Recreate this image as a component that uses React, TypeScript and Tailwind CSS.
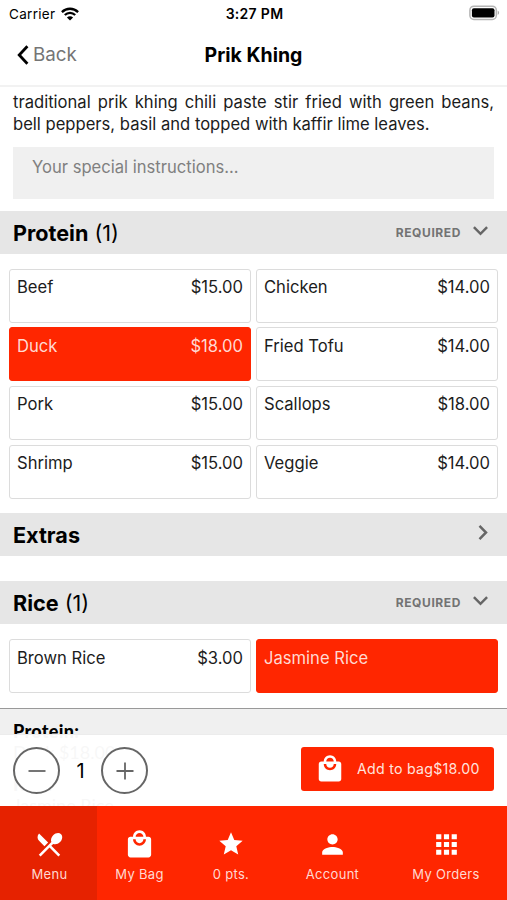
import React from 'react';
import { MdApps, MdLocalDining, MdLocalMall, MdPerson, MdStar } from 'react-icons/md';

interface Option {
  name: string;
  price?: string;
  selected?: boolean;
}

const proteins: Option[] = [
  { name: 'Beef', price: '$15.00' },
  { name: 'Chicken', price: '$14.00' },
  { name: 'Duck', price: '$18.00', selected: true },
  { name: 'Fried Tofu', price: '$14.00' },
  { name: 'Pork', price: '$15.00' },
  { name: 'Scallops', price: '$18.00' },
  { name: 'Shrimp', price: '$15.00' },
  { name: 'Veggie', price: '$14.00' },
];

const rices: Option[] = [
  { name: 'Brown Rice', price: '$3.00' },
  { name: 'Jasmine Rice', selected: true },
];

const StatusBar = () => (
  <div className="grid h-7 shrink-0 grid-cols-3 items-center pl-[9px] pr-[7px] text-[13.5px]">
    <div className="flex items-center gap-[6px]">
      <span className="tracking-[0.3px]">Carrier</span>
      <svg width="18" height="14" viewBox="0 0 18 14" fill="none" stroke="#000" strokeWidth="2.3">
        <path d="M0.9 5.1C5.5 0.6 12.5 0.6 17.1 5.1" />
        <path d="M3.8 8C6.8 5.1 11.2 5.1 14.2 8" />
        <path d="M9 13.6L5.9 10.5C7.7 8.9 10.3 8.9 12.1 10.5Z" fill="#000" stroke="none" />
      </svg>
    </div>
    <div className="pb-px text-center text-[14px] font-semibold tracking-[0.3px]">3:27 PM</div>
    <svg className="-mt-[2px] justify-self-end" width="31" height="16" viewBox="0 0 31 16">
      <rect x="0.9" y="1.2" width="26.4" height="13.2" rx="4" fill="#fff" stroke="#b5b5b5" strokeWidth="1.5" />
      <rect x="2.9" y="3.2" width="22.6" height="9.4" rx="2" fill="#000" />
      <path d="M28.7 5.6C30.6 6.3 30.6 9.3 28.7 10Z" fill="#aaa" />
    </svg>
  </div>
);

const Header = () => (
  <div className="grid h-[59px] shrink-0 grid-cols-3 items-center border-b-2 border-[#f2f2f2] px-[17px] pb-[2px]">
    <button className="flex items-center gap-[4px] text-[18.8px] text-[#757575]">
      <svg className="-mt-px" width="12" height="20" viewBox="0 0 12 20" fill="none" stroke="#000" strokeWidth="2.8">
        <path d="M10.4 1.2L2.2 10L10.4 18.8" />
      </svg>
      Back
    </button>
    <h1 className="pt-px text-center text-[19.5px] font-bold whitespace-nowrap">Prik Khing</h1>
  </div>
);

const SectionHeader = ({ title, count, open }: { title: string; count?: number; open?: boolean }) => (
  <div className="flex h-[43px] shrink-0 items-center justify-between bg-[#e6e6e6] pl-[13px] pr-[19px]">
    <h2 className="pt-[2px] text-[21.6px] font-bold">
      {title}
      {count && <span className="font-normal"> ({count})</span>}
    </h2>
    {open ? (
      <div className="flex items-center gap-3 text-xs font-bold tracking-[0.6px] text-[#737373]">
        REQUIRED
        <svg className="-mt-1" width="15" height="10" viewBox="0 0 15 10" fill="none" stroke="#666" strokeWidth="2.5">
          <path d="M0.9 1.2L7.5 7.8L14.1 1.2" />
        </svg>
      </div>
    ) : (
      <svg className="-mt-1" width="10" height="15" viewBox="0 0 10 15" fill="none" stroke="#666" strokeWidth="2.5">
        <path d="M1.5 0.9L8 7.5L1.5 14.1" />
      </svg>
    )}
  </div>
);

const OptionGrid = ({ options }: { options: Option[] }) => (
  <div className="grid grid-cols-2 gap-x-[5px] gap-y-[4.7px] px-[9px] text-[16.6px] leading-5">
    {options.map((o) => (
      <div
        key={o.name}
        className={`flex h-[54px] justify-between rounded-[3px] border px-[7px] pt-[7.5px] ${
          o.selected ? 'border-[#ff2600] bg-[#ff2600] text-[#ffd9d2]' : 'border-[#dcdcdc] bg-white text-[#1c1c1c]'
        }`}
      >
        <span>{o.name}</span>
        <span>{o.price}</span>
      </div>
    ))}
  </div>
);

const OrderBar = () => (
  <div className="absolute inset-x-0 bottom-[94px] flex h-[72px] items-center justify-between border-t border-[#ececec] bg-white/[0.97] px-[13px]">
    <div className="flex items-center">
      <button className="flex size-[47px] items-center justify-center rounded-full border-2 border-[#666] bg-white">
        <svg width="18" height="18" viewBox="0 0 18 18" stroke="#666" strokeWidth="1.8">
          <path d="M0.5 9H17.5" />
        </svg>
      </button>
      <span className="w-[41px] text-center text-[20px]">1</span>
      <button className="flex size-[47px] items-center justify-center rounded-full border-2 border-[#666] bg-white">
        <svg width="18" height="18" viewBox="0 0 18 18" stroke="#666" strokeWidth="1.8">
          <path d="M0.5 9H17.5M9 0.5V17.5" />
        </svg>
      </button>
    </div>
    <button className="mb-1 flex h-[44px] w-[193px] items-center rounded-[3px] bg-[#ff2600] pl-[14px] text-[14.2px] text-[#ffe3de]">
      <MdLocalMall size={30} className="text-white" />
      <span className="ml-3 tracking-[0.25px] whitespace-nowrap">Add to bag$18.00</span>
    </button>
  </div>
);

const navItem = 'flex flex-col items-center justify-center gap-1 pt-[6px]';

const TabBar = () => (
  <nav className="absolute inset-x-0 bottom-0 grid h-[94px] grid-cols-[97px_85px_98px_105px_122px] bg-[#ff2600] text-[13px] leading-5 tracking-[0.3px] text-[#ffd9d2]">
    <div className={`${navItem} bg-[#e62200] pl-[2px]`}>
      <MdLocalDining size={31} className="text-white" />
      Menu
    </div>
    <div className={navItem}>
      <MdLocalMall size={31} className="text-white" />
      My Bag
    </div>
    <div className={navItem}>
      <MdStar size={28} className="my-[1.5px] text-white" />
      0 pts.
    </div>
    <div className={navItem}>
      <MdPerson size={31} className="text-white" />
      Account
    </div>
    <div className={navItem}>
      <MdApps size={31} className="text-white" />
      My Orders
    </div>
  </nav>
);

export default function App() {
  return (
    <div className="relative flex h-[900px] w-[507px] flex-col overflow-hidden bg-white font-['Inter',sans-serif] text-black">
      <StatusBar />
      <Header />
      <p className="mt-1 px-[13px] text-justify text-[16.6px] leading-[22px] text-[#1c1c1c]">
        traditional prik khing chili paste stir fried with green beans, bell peppers, basil and topped with kaffir
        lime leaves.
      </p>
      <div className="mx-[13px] mt-3 mb-3 h-[52px] shrink-0 bg-[#f0f0f0] px-[19px] pt-[9px] text-[16.6px] leading-[22px] text-[#808080]">
        Your special instructions...
      </div>
      <SectionHeader title="Protein" count={1} open />
      <div className="pt-[14.5px] pb-[14.5px]">
        <OptionGrid options={proteins} />
      </div>
      <SectionHeader title="Extras" />
      <div className="h-[25px] shrink-0" />
      <SectionHeader title="Rice" count={1} open />
      <div className="pt-[15px] pb-[15px]">
        <OptionGrid options={rices} />
      </div>
      <div className="flex-1 border-t border-[#999] bg-[#f0f0f0] px-[13px] pt-3 font-['Lato',sans-serif] text-[18px] leading-[21px]">
        <p className="font-black tracking-[0.3px]">Protein:</p>
        <p>Duck $18.00</p>
        <p className="mt-[11px] font-black">Rice:</p>
        <p>Jasmine Rice</p>
      </div>
      <OrderBar />
      <TabBar />
    </div>
  );
}
